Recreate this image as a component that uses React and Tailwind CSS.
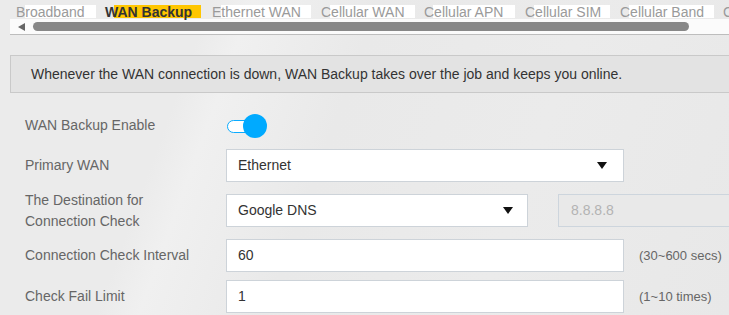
import React from 'react'

// box widths / left margins measured off the tab strip
const tabs = [
  { name: 'Broadband', w: 71, ml: 0 },
  { name: 'WAN Backup', w: 87, ml: 18 },
  { name: 'Ethernet WAN', w: 90, ml: 20 },
  { name: 'Cellular WAN', w: 85, ml: 19 },
  { name: 'Cellular APN', w: 82, ml: 18 },
  { name: 'Cellular SIM', w: 76, ml: 19 },
  { name: 'Cellular Band', w: 85, ml: 19 },
  { name: 'Cellular', w: 70, ml: 18 },
]

const Caret = () => (
  <svg width="10" height="7" viewBox="0 0 10 7" className="shrink-0">
    <path d="M0 0 H10 L5 7 Z" fill="#111" />
  </svg>
)

const Row = ({ label, children, className = '' }) => (
  <div className={`flex items-center ${className}`}>
    <div className="w-[201px] shrink-0 text-[14px] leading-[21px] text-[#666]">{label}</div>
    {children}
  </div>
)

export default function App() {
  return (
    <div
      className="w-[729px] h-[315px] overflow-hidden bg-[#ebebeb] bg-[linear-gradient(110deg,#ebebeb_0%,#ebebeb_25%,#f0f0f0_30%,#e9e9e9_45%,#ebebeb_70%,#e8e8e8_100%)]"
      style={{ fontFamily: '"Liberation Sans", Arial, sans-serif' }}
    >
      {/* tab strip */}
      <div className="flex pl-[25px] pt-[5px] whitespace-nowrap">
        {tabs.map((t) => {
          const active = t.name === 'WAN Backup'
          return (
            <div
              key={t.name}
              className={`flex h-[13px] items-center shrink-0 ${active ? 'bg-[#ffc600]' : 'bg-white'}`}
              style={{ width: t.w, marginLeft: t.ml }}
            >
              <span
                className={`-ml-[9px] text-[14px] leading-[14px] ${active ? 'font-bold text-[#333]' : 'text-[#9a9a9a]'}`}
              >
                {t.name}
              </span>
            </div>
          )
        })}
      </div>

      {/* scroll bar */}
      <div className="ml-[10px] mt-[1px] flex h-[16px] items-center border-b border-[#bdbdbd] bg-[#fbfbfb]">
        <svg width="7" height="8" viewBox="0 0 7 8" className="ml-[8px]">
          <path d="M7 0 V8 L0 4 Z" fill="#666" />
        </svg>
        <div className="ml-[8px] h-[9px] w-[656px] rounded-full bg-[#888]" />
      </div>

      {/* info */}
      <div className="ml-[10px] mt-[20px] flex h-[38px] w-[730px] items-center border border-[#c9c9c9] bg-[#e3e3e3] pl-[20px] text-[14px] text-[#333]">
        Whenever the WAN connection is down, WAN Backup takes over the job and keeps you online.
      </div>

      <div className="pl-[25px]">
        <Row label="WAN Backup Enable" className="mt-[16px] h-[33px]">
          <div className="relative ml-[1px] h-[24px] w-[40px]">
            <div className="absolute left-0 top-[6px] h-[13px] w-[30px] rounded-full border border-[#0aabff] bg-white" />
            <div className="absolute left-[16px] top-0 h-[24px] w-[24px] rounded-full bg-[#00aaff]" />
          </div>
        </Row>

        <Row label="Primary WAN" className="mt-[7px] h-[33px]">
          <div className="flex h-[33px] w-[398px] shrink-0 items-center justify-between border border-[#cdd3d9] bg-white pl-[11px] pr-[16px] text-[14px] text-[#333]">
            <span>Ethernet</span>
            <Caret />
          </div>
        </Row>

        <Row
          label={
            <>
              The Destination for
              <br />
              Connection Check
            </>
          }
          className="mt-[12px] h-[33px]"
        >
          <div className="flex h-[33px] w-[302px] shrink-0 items-center justify-between border border-[#cdd3d9] bg-white pl-[11px] pr-[14px] text-[14px] text-[#333]">
            <span>Google DNS</span>
            <Caret />
          </div>
          <div className="ml-[30px] flex h-[33px] w-[200px] shrink-0 items-center border border-[#cdd5dd] bg-[#e9e9e9] pl-[12px] text-[14px] text-[#b3b3b3]">
            8.8.8.8
          </div>
        </Row>

        <Row label="Connection Check Interval" className="mt-[12px] h-[33px]">
          <div className="flex h-[33px] w-[398px] shrink-0 items-center border border-[#cdd3d9] bg-white pl-[11px] text-[14px] text-[#333]">
            60
          </div>
          <span className="ml-[15px] whitespace-nowrap text-[13px] text-[#666]">(30~600 secs)</span>
        </Row>

        <Row label="Check Fail Limit" className="mt-[8px] h-[33px]">
          <div className="flex h-[33px] w-[398px] shrink-0 items-center border border-[#cdd3d9] bg-white pl-[11px] text-[14px] text-[#333]">
            1
          </div>
          <span className="ml-[15px] whitespace-nowrap text-[13px] text-[#666]">(1~10 times)</span>
        </Row>
      </div>
    </div>
  )
}
